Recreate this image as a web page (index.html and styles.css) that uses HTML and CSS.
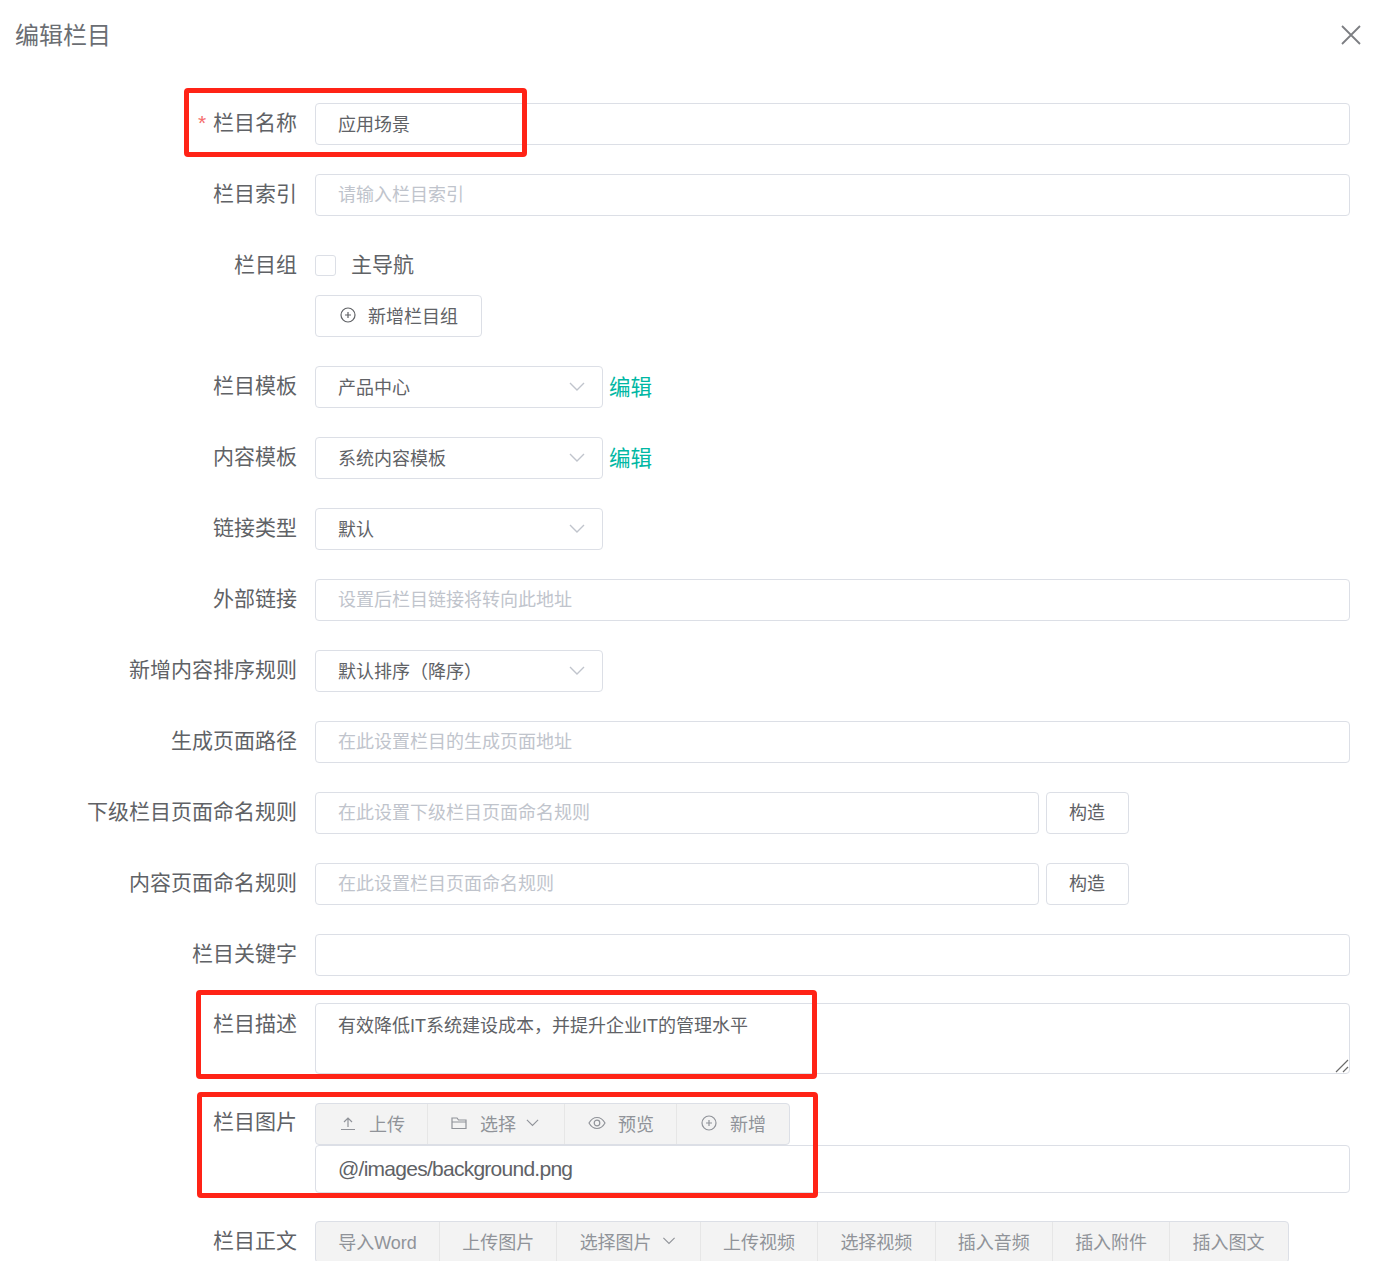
FILE: index.html
```html
<!DOCTYPE html>
<html lang="zh-CN">
<head>
<meta charset="utf-8">
<title>编辑栏目</title>
<link rel="stylesheet" href="styles.css">
</head>
<body>
<div class="dialog">
  <header class="head">
    <h1 class="title">编辑栏目</h1>
    <svg class="close" viewBox="0 0 20 20"><path d="M1 1l18 18M19 1L1 19"/></svg>
  </header>
  <form class="form">
    <div class="row"><label class="label"><span class="req">*</span> 栏目名称</label><div class="field"><input class="input filled" value="应用场景"></div></div>
    <div class="row"><label class="label">栏目索引</label><div class="field"><input class="input" placeholder="请输入栏目索引"></div></div>
    <div class="row"><label class="label">栏目组</label>
      <div class="field stack">
        <div class="check"><span class="box"></span><span class="check-text">主导航</span></div>
        <button type="button" class="btn add-group"><svg class="ico" viewBox="0 0 16 16"><circle cx="8" cy="8" r="7"/><path d="M8 5v6M5 8h6"/></svg>新增栏目组</button>
      </div>
    </div>
    <div class="row"><label class="label">栏目模板</label><div class="field inline"><div class="select">产品中心<svg class="chev" viewBox="0 0 16 10"><path d="M1 1l7 7 7-7"/></svg></div><a class="link">编辑</a></div></div>
    <div class="row"><label class="label">内容模板</label><div class="field inline"><div class="select">系统内容模板<svg class="chev" viewBox="0 0 16 10"><path d="M1 1l7 7 7-7"/></svg></div><a class="link">编辑</a></div></div>
    <div class="row"><label class="label">链接类型</label><div class="field inline"><div class="select">默认<svg class="chev" viewBox="0 0 16 10"><path d="M1 1l7 7 7-7"/></svg></div></div></div>
    <div class="row"><label class="label">外部链接</label><div class="field"><input class="input" placeholder="设置后栏目链接将转向此地址"></div></div>
    <div class="row"><label class="label">新增内容排序规则</label><div class="field inline"><div class="select">默认排序（降序）<svg class="chev" viewBox="0 0 16 10"><path d="M1 1l7 7 7-7"/></svg></div></div></div>
    <div class="row"><label class="label">生成页面路径</label><div class="field"><input class="input" placeholder="在此设置栏目的生成页面地址"></div></div>
    <div class="row"><label class="label">下级栏目页面命名规则</label><div class="field inline"><input class="input short" placeholder="在此设置下级栏目页面命名规则"><button type="button" class="btn build">构造</button></div></div>
    <div class="row"><label class="label">内容页面命名规则</label><div class="field inline"><input class="input short" placeholder="在此设置栏目页面命名规则"><button type="button" class="btn build">构造</button></div></div>
    <div class="row"><label class="label">栏目关键字</label><div class="field"><input class="input"></div></div>
    <div class="row row-desc"><label class="label label-desc">栏目描述</label><div class="field field-area"><textarea class="textarea">有效降低IT系统建设成本，并提升企业IT的管理水平</textarea><svg class="grip" viewBox="0 0 14 14"><path d="M1 13L13 1M8 13l5-5"/></svg></div></div>
    <div class="row row-image"><label class="label label-image">栏目图片</label>
      <div class="field">
        <div class="bar bar-image">
          <span class="tool t-upload"><svg class="ico" viewBox="0 0 16 16"><path d="M8 12V3M4 7l4-4 4 4M1 14.500h14"/></svg>上传</span>
          <span class="tool t-choose"><svg class="ico" viewBox="0 0 16 16"><path d="M1 13.500V3h5l1.500 2H15v8.500zM1 7h14"/></svg>选择<svg class="chev small" viewBox="0 0 16 10"><path d="M1 1l7 7 7-7"/></svg></span>
          <span class="tool t-view"><svg class="ico eye" viewBox="0 0 18 14"><path d="M1 7c2-3.500 5-5.500 8-5.500s6 2 8 5.500c-2 3.500-5 5.500-8 5.500S3 10.500 1 7z"/><circle cx="9" cy="7" r="2.800"/></svg>预览</span>
          <span class="tool t-add"><svg class="ico" viewBox="0 0 16 16"><circle cx="8" cy="8" r="7"/><path d="M8 5v6M5 8h6"/></svg>新增</span>
        </div>
        <input class="input tall" value="@/images/background.png">
      </div>
    </div>
    <div class="row"><label class="label">栏目正文</label>
      <div class="field">
        <div class="bar">
          <span class="tool plain">导入Word</span>
          <span class="tool plain">上传图片</span>
          <span class="tool plain">选择图片<svg class="chev small wide" viewBox="0 0 16 10"><path d="M1 1l7 7 7-7"/></svg></span>
          <span class="tool plain">上传视频</span>
          <span class="tool plain">选择视频</span>
          <span class="tool plain">插入音频</span>
          <span class="tool plain">插入附件</span>
          <span class="tool plain last">插入图文</span>
        </div>
      </div>
    </div>
  </form>
  <div class="mark mark-name"></div>
  <div class="mark mark-desc"></div>
  <div class="mark mark-image"></div>
</div>
</body>
</html>
```
FILE: styles.css
```css
* { box-sizing: border-box; }
html, body { margin: 0; height: 1261px; overflow: hidden; background: #fff; }
body { font-family: "Liberation Sans", "Noto Sans CJK SC", sans-serif; color: #606266; }
.dialog { position: relative; height: 1261px; overflow: hidden; }
.head { display: flex; justify-content: space-between; align-items: flex-start; height: 103px; padding: 20px 16px 0 15px; }
.title { margin: 0; font-size: 24px; line-height: 32px; font-weight: 400; color: #6b6e73; }
.close { width: 20px; height: 20px; margin-top: 5px; fill: none; stroke: #7c7e82; stroke-width: 1.800; }
.form { padding-right: 27px; }
.row { display: grid; grid-template-columns: 297px 1fr; column-gap: 18px; margin-bottom: 29px; }
.label { font-size: 21px; line-height: 40px; text-align: right; color: #606266; white-space: nowrap; }
.label-desc { padding-top: 1px; }
.label-image { margin-top: -1px; }
.req { color: #f56c6c; font-size: 21px; margin-right: 1px; }
.field { min-width: 0; }
.field-area { position: relative; }
.inline { display: flex; gap: 7px; align-items: center; }
.input { display: block; width: 100%; height: 42px; padding: 0 22px; border: 1px solid #dcdfe6; border-radius: 4px; font: inherit; font-size: 18px; line-height: 22px; color: #606266; background: #fff; outline: none; }
.input::placeholder { color: #c0c4cc; opacity: 1; }
.input.filled { padding-bottom: 3px; }
.input.short { width: 724px; }
.input.tall { height: 48px; font-size: 21px; letter-spacing: -0.74px; }
.select { position: relative; display: flex; align-items: center; width: 288px; height: 42px; padding: 0 0 2px 22px; border: 1px solid #dcdfe6; border-radius: 4px; font-size: 18px; color: #606266; }
.chev { fill: none; stroke: #c0c4cc; stroke-width: 1.400; }
.select .chev { position: absolute; right: 17px; top: 15px; width: 16px; height: 10px; }
.link { font-size: 21.500px; color: #00b7a3; line-height: 40px; margin: 2px 0 0 -1px; }
.btn { display: inline-flex; align-items: center; height: 42px; border: 1px solid #dcdfe6; border-radius: 4px; background: #fff; font: inherit; font-size: 18px; color: #606266; padding: 0 22px 2px; }
.build { width: 83px; padding-bottom: 4px; }
.stack { display: flex; flex-direction: column; align-items: flex-start; gap: 10px; }
.check { display: flex; align-items: center; height: 40px; }
.box { width: 21px; height: 21px; border: 1px solid #dcdfe6; border-radius: 3px; background: #fff; }
.check-text { margin-left: 15px; padding-bottom: 5px; font-size: 21px; color: #606266; }
.ico { flex: none; width: 16px; height: 16px; fill: none; stroke: currentColor; stroke-width: 1.200; }
.add-group { width: 167px; padding-left: 24px; gap: 12px; }
.row-desc { margin-top: -2px; }
.textarea { display: block; width: 100%; height: 71px; padding: 9px 22px; border: 1px solid #dcdfe6; border-radius: 4px; font: inherit; font-size: 18px; line-height: 26px; color: #606266; outline: none; resize: none; }
.grip { position: absolute; right: 1px; bottom: 1px; width: 14px; height: 14px; fill: none; stroke: #6a6a6a; stroke-width: 1.200; }
.row-image { margin-bottom: 28px; }
.bar { display: inline-flex; height: 42px; border: 1px solid #dcdfe6; border-radius: 4px; background: #f3f3f3; color: #909399; font-size: 18px; vertical-align: top; }
.bar-image { display: flex; width: 475px; }
.tool { display: flex; align-items: center; padding-bottom: 3px; border-left: 1px solid #e6e6e6; white-space: nowrap; }
.tool:first-child { border-left: 0; }
.t-upload { width: 111px; padding-left: 24px; gap: 13px; }
.t-choose { width: 137px; padding-left: 23px; gap: 13px; }
.t-view { width: 112px; padding-left: 23px; gap: 12px; }
.t-add { width: 113px; padding-left: 24px; gap: 13px; }
.eye { width: 18px; height: 14px; }
.chev.small { width: 13px; height: 8px; stroke: #909399; margin-left: -3px; }
.chev.small.wide { width: 14px; margin-left: 10px; margin-right: 2px; }
.plain { padding: 0 22.200px 3px; }
.plain.last { padding-right: 23px; }
.mark { position: absolute; border: 5px solid #ff2316; border-radius: 4px; pointer-events: none; }
.mark-name { left: 184px; top: 88px; width: 343px; height: 69px; }
.mark-desc { left: 196px; top: 990px; width: 621px; height: 89px; }
.mark-image { left: 197px; top: 1092px; width: 621px; height: 106px; }
```
